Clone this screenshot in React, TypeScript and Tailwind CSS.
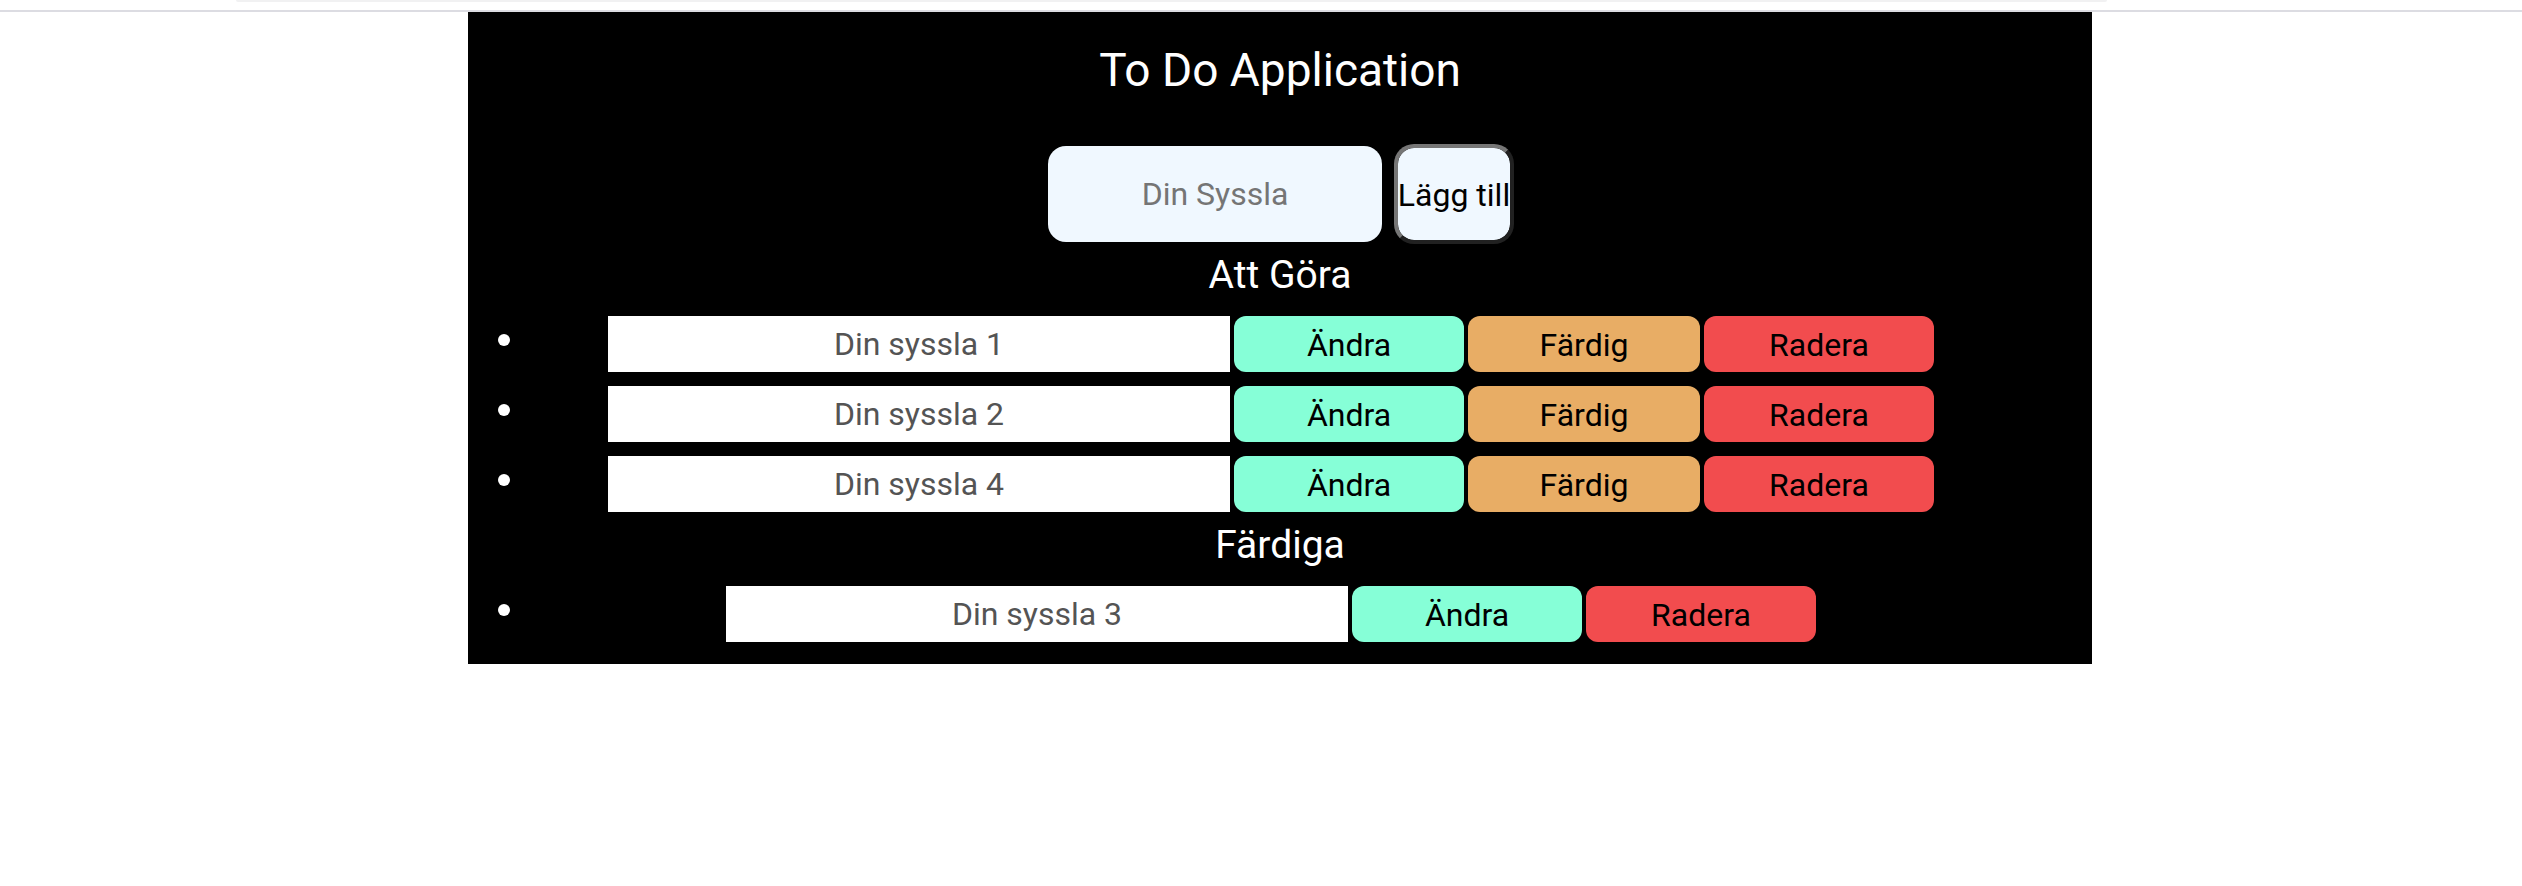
import { useState } from 'react';

type Task = { id: number; title: string };

const openTasks: Task[] = [
  { id: 1, title: 'Din syssla 1' },
  { id: 2, title: 'Din syssla 2' },
  { id: 4, title: 'Din syssla 4' },
];

const doneTasks: Task[] = [{ id: 3, title: 'Din syssla 3' }];

const actionClass = 'h-14 rounded-xl pt-[2px] text-center text-black';
const headingClass = 'mb-[10px] text-center text-[39px] leading-[62px]';

function TaskRow({ task, done = false }: { task: Task; done?: boolean }) {
  return (
    <li className="flex pr-[60px] pl-[30px]">
      <span className="mt-[18px] size-3 shrink-0 rounded-full bg-white" />
      <div className="flex flex-1 justify-center gap-1">
        <input
          type="text"
          aria-label={`Syssla ${task.id}`}
          defaultValue={task.title}
          disabled
          className="h-14 w-[622px] bg-white text-center text-[#545454]"
        />
        <button type="button" className={`${actionClass} w-[230px] bg-[#86ffd7]`}>
          Ändra
        </button>
        {!done && (
          <button type="button" className={`${actionClass} w-[232px] bg-[#e8ad65]`}>
            Färdig
          </button>
        )}
        <button type="button" className={`${actionClass} w-[230px] bg-[#f24c4e]`}>
          Radera
        </button>
      </div>
    </li>
  );
}

export default function App() {
  const [draft, setDraft] = useState('');

  return (
    <div className="min-h-screen bg-white font-['Roboto',sans-serif] text-[32px] leading-10">
      <header className="h-3 border-b-2 border-[#dcdce2] pr-[415px] pl-[236px]">
        <div className="h-[2px] rounded-b-full bg-[#f1f1f2]" />
      </header>

      <main className="mr-[430px] ml-[468px] bg-black pt-5 pb-5 text-white">
        <h1 className="text-center text-[46px] leading-[76px]">To Do Application</h1>

        <form className="mt-9 flex items-center justify-center gap-3 pl-[2px]" onSubmit={(e) => e.preventDefault()}>
          <input
            type="text"
            aria-label="Din Syssla"
            placeholder="Din Syssla"
            value={draft}
            onChange={(e) => setDraft(e.target.value)}
            className="h-24 w-[334px] rounded-[18px] bg-[#f0f8ff] text-center text-black placeholder:text-[#757575]"
          />
          <button
            type="submit"
            className="flex h-[100px] w-[120px] items-center justify-center rounded-[20px] border-4 border-t-[#767676] border-r-[#212121] border-b-[#212121] border-l-[#767676] bg-[#f0f8ff] bg-clip-padding pt-[2px] whitespace-nowrap text-black"
          >
            Lägg till
          </button>
        </form>

        <h2 className={headingClass}>Att Göra</h2>
        <ul className="flex flex-col gap-[14px] pb-[2px]">
          {openTasks.map((task) => (
            <TaskRow key={task.id} task={task} />
          ))}
        </ul>

        <h2 className={headingClass}>Färdiga</h2>
        <ul className="flex flex-col gap-[14px] pb-[2px]">
          {doneTasks.map((task) => (
            <TaskRow key={task.id} task={task} done />
          ))}
        </ul>
      </main>
    </div>
  );
}
